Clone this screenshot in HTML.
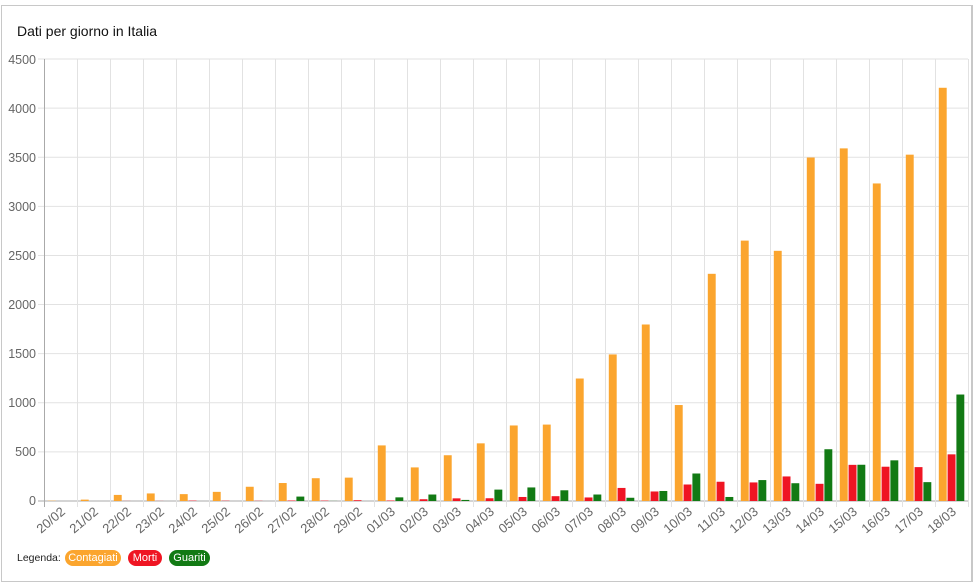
<!DOCTYPE html>
<html><head><meta charset="utf-8"><style>
body{margin:0;background:#fff;width:975px;height:583px;overflow:hidden;font-family:"Liberation Sans",Arial,sans-serif}
#frame{position:absolute;left:1px;top:5px;width:969px;height:575px;border:1px solid #c8c8c8;border-right:2px solid #c8c8c8}
.title{position:absolute;left:17px;top:23px;font-size:14px;color:#111}
.leg{position:absolute;font-size:10.5px}
.pill{position:absolute;top:550px;height:16px;border-radius:8px;color:#fff;font-size:11px;line-height:16px;text-align:center}
</style></head><body>
<div id="frame"></div>
<div class="title">Dati per giorno in Italia</div>
<svg id="c" width="975" height="583" style="position:absolute;left:0;top:0" font-family="Liberation Sans, Arial, sans-serif">
<g id="grid"></g>
<g id="bars"></g>
<g font-size="12.5" fill="#666" text-anchor="end">
<text x="36" y="64">4500</text><text x="36" y="113">4000</text><text x="36" y="162">3500</text><text x="36" y="211">3000</text><text x="36" y="260">2500</text><text x="36" y="309">2000</text><text x="36" y="358">1500</text><text x="36" y="407">1000</text><text x="36" y="456">500</text><text x="36" y="505">0</text>
</g>
<g font-size="13" fill="#666" text-anchor="end" id="xl">
<text transform="translate(66,513) rotate(-40)">20/02</text>
<text transform="translate(99,513) rotate(-40)">21/02</text>
<text transform="translate(132,513) rotate(-40)">22/02</text>
<text transform="translate(165,513) rotate(-40)">23/02</text>
<text transform="translate(198,513) rotate(-40)">24/02</text>
<text transform="translate(231,513) rotate(-40)">25/02</text>
<text transform="translate(264,513) rotate(-40)">26/02</text>
<text transform="translate(297,513) rotate(-40)">27/02</text>
<text transform="translate(330,513) rotate(-40)">28/02</text>
<text transform="translate(363,513) rotate(-40)">29/02</text>
<text transform="translate(396,513) rotate(-40)">01/03</text>
<text transform="translate(429,513) rotate(-40)">02/03</text>
<text transform="translate(462,513) rotate(-40)">03/03</text>
<text transform="translate(495,513) rotate(-40)">04/03</text>
<text transform="translate(528,513) rotate(-40)">05/03</text>
<text transform="translate(561,513) rotate(-40)">06/03</text>
<text transform="translate(594,513) rotate(-40)">07/03</text>
<text transform="translate(627,513) rotate(-40)">08/03</text>
<text transform="translate(660,513) rotate(-40)">09/03</text>
<text transform="translate(693,513) rotate(-40)">10/03</text>
<text transform="translate(726,513) rotate(-40)">11/03</text>
<text transform="translate(759,513) rotate(-40)">12/03</text>
<text transform="translate(792,513) rotate(-40)">13/03</text>
<text transform="translate(825,513) rotate(-40)">14/03</text>
<text transform="translate(858,513) rotate(-40)">15/03</text>
<text transform="translate(891,513) rotate(-40)">16/03</text>
<text transform="translate(924,513) rotate(-40)">17/03</text>
<text transform="translate(957,513) rotate(-40)">18/03</text>
</g>
</svg>
<div class="leg" style="left:17px;top:552px;color:#222">Legenda:</div>
<div class="pill" style="left:65px;width:56px;background:#fba52e">Contagiati</div>
<div class="pill" style="left:128px;width:34px;background:#ef1523">Morti</div>
<div class="pill" style="left:169px;width:41px;background:#127a14">Guariti</div>
<script>
var C=[3,14,62,77,70,93,145,183,232,238,566,342,466,587,769,778,1247,1492,1797,977,2313,2651,2547,3497,3590,3233,3526,4207];
var M=[0,0,1,1,4,3,2,5,4,8,5,18,27,28,41,49,36,133,97,168,196,189,250,175,368,349,345,475];
var G=[0,0,0,0,0,0,0,45,1,0,37,66,11,116,138,109,66,33,102,280,41,213,181,527,369,414,192,1084];
var ns="http://www.w3.org/2000/svg",g=document.getElementById('grid'),b=document.getElementById('bars');
function el(p,t,a){var e=document.createElementNS(ns,t);for(var k in a)e.setAttribute(k,a[k]);p.appendChild(e);}
var x0=44,w=33,y0=501,s=442/4500;
for(var i=0;i<10;i++){var y=y0-i*500*s;el(g,'line',{x1:38,x2:968,y1:y,y2:y,stroke:i?'#e2e2e2':'#aaa','stroke-width':1});}
for(var i=0;i<=28;i++){var x=x0+i*w+.5;el(g,'line',{x1:x,x2:x,y1:59,y2:507,stroke:i?'#e2e2e2':'#aaa','stroke-width':1});}
var cols=['#fba52e','#ef1523','#127a14'],D=[C,M,G];
for(var i=0;i<28;i++)for(var j=0;j<3;j++){var v=D[j][i];if(!v)continue;var h=v*s;
el(b,'rect',{x:x0+i*w+3.8+j*8.8,y:y0-h,width:7.9,height:h,fill:cols[j]});}
</script>
</body></html>
